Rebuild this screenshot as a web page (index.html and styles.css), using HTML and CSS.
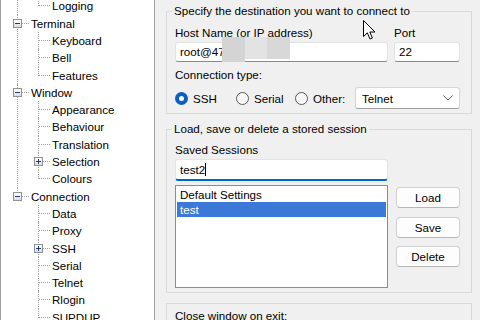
FILE: index.html
```html
<!DOCTYPE html>
<html lang="en">

<head>
    <meta charset="UTF-8">
    <meta name="viewport" content="width=device-width, initial-scale=1.0">
    <title>PuTTY Configuration</title>
    <link rel="stylesheet" href="styles.css">
</head>

<body>
    <div class="tree">
        <ul class="nodes">
            <li>
                <div class="row"><span class="box"></span>Session</div>
                <ul>
                    <li><div class="row">Logging</div></li>
                </ul>
            </li>
            <li>
                <div class="row"><span class="box"></span>Terminal</div>
                <ul>
                    <li><div class="row">Keyboard</div></li>
                    <li><div class="row">Bell</div></li>
                    <li><div class="row">Features</div></li>
                </ul>
            </li>
            <li>
                <div class="row"><span class="box"></span>Window</div>
                <ul>
                    <li><div class="row">Appearance</div></li>
                    <li><div class="row">Behaviour</div></li>
                    <li><div class="row">Translation</div></li>
                    <li><div class="row"><span class="box plus"></span>Selection</div></li>
                    <li><div class="row">Colours</div></li>
                </ul>
            </li>
            <li>
                <div class="row"><span class="box"></span>Connection</div>
                <ul>
                    <li><div class="row">Data</div></li>
                    <li><div class="row">Proxy</div></li>
                    <li><div class="row"><span class="box plus"></span>SSH</div></li>
                    <li><div class="row">Serial</div></li>
                    <li><div class="row">Telnet</div></li>
                    <li><div class="row">Rlogin</div></li>
                    <li><div class="row">SUPDUP</div></li>
                </ul>
            </li>
        </ul>
    </div>

    <div class="main">
        <fieldset class="group">
            <legend>Specify the destination you want to connect to</legend>
            <div class="host-grid">
                <span>Host Name (or IP address)</span>
                <span>Port</span>
                <div class="field host">root@47
                    <div class="redact">
                        <i class="r1"></i><i class="r2"></i><i class="r3"></i>
                    </div>
                </div>
                <div class="field">22</div>
            </div>
            <div class="label">Connection type:</div>
            <div class="radios">
                <label class="radio"><span class="dot on"></span>SSH</label>
                <label class="radio"><span class="dot"></span>Serial</label>
                <label class="radio"><span class="dot"></span>Other:</label>
                <div class="select">Telnet
                    <svg width="10" height="6" viewBox="0 0 10 6"><polyline points="0.5,0.5 5,5 9.5,0.5" fill="none" stroke="#606060" stroke-width="1"/></svg>
                </div>
            </div>
        </fieldset>

        <fieldset class="group second">
            <legend>Load, save or delete a stored session</legend>
            <div class="label sessions">Saved Sessions</div>
            <div class="field focus">test2<span class="caret"></span></div>
            <div class="session-row">
                <div class="listbox">
                    <div class="item">Default Settings</div>
                    <div class="item selected">test</div>
                </div>
                <div class="buttons">
                    <button>Load</button>
                    <button>Save</button>
                    <button>Delete</button>
                </div>
            </div>
        </fieldset>

        <div class="group third">Close window on exit:</div>
    </div>

    <svg class="pointer" width="14" height="21" viewBox="0 0 14 21">
        <path d="M0.5 0.5 V16.5 L4.3 12.8 L7 19 L9.4 18 L6.8 12 H12 Z" fill="#fff" stroke="#000" stroke-width="1" stroke-linejoin="miter"/>
    </svg>
</body>

</html>
```

FILE: styles.css
```css
* {
    box-sizing: border-box;
}

body {
    margin: 0;
    width: 480px;
    height: 320px;
    overflow: hidden;
    display: flex;
    position: relative;
    background-color: #f0f0f0;
    font: 400 11.6px 'Liberation Sans', Arial, sans-serif;
    color: #000;
}

/* tree on the left */
.tree {
    flex: none;
    width: 155px;
    height: 320px;
    overflow: hidden;
    background-color: #fff;
    border-left: 1px solid #a0a0a0;
    border-right: 1px solid #a0a0a0;
}

.nodes,
.nodes ul {
    list-style: none;
    margin: 0;
    padding: 0;
}

.nodes {
    margin-top: -19.95px;
}

.nodes ul {
    padding-left: 21px;
}

.nodes li {
    position: relative;
}

.nodes li::before {
    content: '';
    position: absolute;
    left: 16px;
    top: 0;
    bottom: 0;
    border-left: 1px dotted #a0a0a0;
}

.nodes li:last-child::before {
    bottom: auto;
    height: 9px;
}

.row {
    position: relative;
    height: 17.3px;
    line-height: 17.3px;
    padding-left: 30px;
    white-space: nowrap;
}

.row::before {
    content: '';
    position: absolute;
    left: 17px;
    top: 8px;
    width: 11px;
    border-top: 1px dotted #a0a0a0;
}

.box {
    position: absolute;
    z-index: 1;
    left: 12px;
    top: 4px;
    width: 9px;
    height: 9px;
    border: 1px solid #919191;
    background: linear-gradient(#fff, #dcdcdc);
}

.box::before {
    content: '';
    position: absolute;
    left: 1px;
    top: 3px;
    width: 5px;
    height: 1px;
    background-color: #1f3c78;
}

.box.plus::after {
    content: '';
    position: absolute;
    left: 3px;
    top: 1px;
    width: 1px;
    height: 5px;
    background-color: #1f3c78;
}

/* right side */
.main {
    flex: 1;
    padding: 4px 8px 0 11px;
}

.group {
    margin: 0;
    min-width: 0;
    padding: 0 11px 4px 8px;
    border: 1px solid #d9d9d9;
}

legend {
    padding: 0 2px;
    margin-left: -3px;
    line-height: 14px;
}

.host-grid {
    display: grid;
    grid-template-columns: 213px 66px;
    column-gap: 6px;
    row-gap: 2px;
    margin-top: 8px;
    line-height: 14px;
}

.field {
    position: relative;
    height: 20px;
    line-height: 18px;
    padding: 0 4px;
    background-color: #fff;
    border: 1px solid #e3e3e3;
    border-bottom-color: #8a8a8a;
    border-radius: 3px;
}

.redact {
    position: absolute;
    left: 46px;
    top: -6px;
    display: flex;
    align-items: flex-start;
}

.redact i {
    display: block;
    width: 23px;
    height: 22px;
}

.redact .r1 {
    height: 25px;
    background-color: #d4d4d4;
}

.redact .r2 {
    width: 22px;
    background-color: #e3e3e3;
}

.redact .r3 {
    background-color: #d8d8d8;
}

.label {
    margin-top: 6px;
    line-height: 14px;
}

.radios {
    display: grid;
    grid-template-columns: 61px 59px 60px 1fr;
    align-items: center;
    margin-top: 5px;
    height: 22px;
}

.radio {
    display: flex;
    align-items: center;
    gap: 5px;
}

.dot {
    width: 13px;
    height: 13px;
    border-radius: 50%;
    border: 1px solid #5a5a5a;
    background-color: #f7f7f7;
}

.dot.on {
    border: 4px solid #0a5fc4;
    background-color: #fff;
}

.select {
    display: flex;
    align-items: center;
    justify-content: space-between;
    height: 22px;
    padding: 0 6px;
    background-color: #fff;
    border: 1px solid #d6d6d6;
    border-bottom-color: #a0a0a0;
    border-radius: 3px;
}

.second {
    margin-top: 8px;
}

.sessions {
    margin-top: 7px;
}

.field.focus {
    width: 213px;
    height: 22px;
    margin-top: 2px;
    line-height: 19px;
    border-bottom: 2px solid #0067c0;
}

.caret {
    display: inline-block;
    width: 1px;
    height: 13px;
    vertical-align: -2px;
    background-color: #000;
}

.session-row {
    display: flex;
    gap: 8px;
    margin-top: 4px;
}

.listbox {
    width: 213px;
    height: 103px;
    padding: 1px;
    background-color: #fff;
    border: 1px solid #8c8c8c;
}

.item {
    height: 15px;
    line-height: 15px;
    padding-left: 3px;
}

.item.selected {
    color: #fff;
    background-color: #3b78d8;
}

.buttons {
    display: flex;
    flex-direction: column;
    gap: 8.5px;
    padding-top: 2px;
}

button {
    width: 64px;
    height: 21px;
    padding: 0;
    font: inherit;
    color: #000;
    background-color: #fdfdfd;
    border: 1px solid #d0d0d0;
    border-bottom-color: #b8b8b8;
    border-radius: 4px;
}

.third {
    margin-top: 10px;
    height: 40px;
    padding-top: 5px;
    line-height: 14px;
}

.pointer {
    position: absolute;
    left: 363px;
    top: 20px;
}
```
